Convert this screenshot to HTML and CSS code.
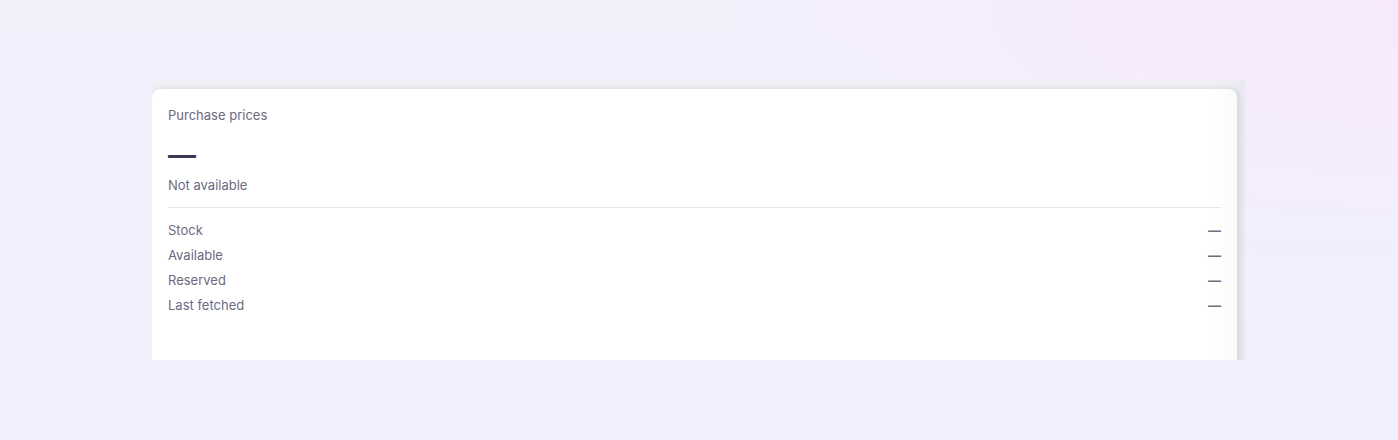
FILE: index.html
```html
<!DOCTYPE html>
<html lang="en">
<head>
<meta charset="utf-8">
<title>Purchase prices</title>
<link rel="stylesheet" href="styles.css">
</head>
<body>
<div class="stage">
  <div class="clip">
    <section class="card">
      <div class="title">Purchase prices</div>
      <div class="big">—</div>
      <div class="note">Not available</div>
      <hr class="sep">
      <dl class="rows">
        <div class="row"><dt>Stock</dt><dd>—</dd></div>
        <div class="row"><dt>Available</dt><dd>—</dd></div>
        <div class="row"><dt>Reserved</dt><dd>—</dd></div>
        <div class="row"><dt>Last fetched</dt><dd>—</dd></div>
      </dl>
    </section>
    <div class="fade"></div>
  </div>
</div>
</body>
</html>
```

FILE: styles.css
```css
html, body {
  margin: 0;
  padding: 0;
  height: 100%;
}
body {
  font-family: Inter, "Noto Sans", "Liberation Sans", sans-serif;
  overflow: hidden;
}
.stage {
  width: 1398px;
  height: 440px;
  background:
    radial-gradient(ellipse 700px 300px at 100% 0%, rgba(248, 232, 252, 0.9), rgba(248, 232, 252, 0) 100%),
    linear-gradient(180deg, #f3f0fc 0%, #eff0fc 100%);
  padding-top: 80px;
  padding-left: 152px;
  box-sizing: border-box;
}
.clip {
  position: relative;
  width: 1093px;
  height: 280px;
  overflow: hidden;
  padding-top: 9px;
  padding-right: 8px;
  box-sizing: border-box;
  background: #efeff4;
}
.card {
  background: #ffffff;
  border-radius: 8px 8px 0 0;
  height: 320px;
  padding: 16px 16px;
  box-sizing: border-box;
  box-shadow: 0 0 6px rgba(60, 60, 90, 0.08), 3px 0 4px rgba(60, 60, 90, 0.08);
  color: #6b6a80;
  font-size: 13px;
  line-height: 20px;
}
.fade {
  position: absolute;
  top: 0;
  right: 0;
  bottom: 0;
  width: 36px;
  background: linear-gradient(90deg, rgba(80, 80, 110, 0) 0%, rgba(80, 80, 110, 0.025) 70%, rgba(80, 80, 110, 0.04) 100%);
  pointer-events: none;
}
.title {
  color: #6b6a80;
}
.big {
  font-size: 28px;
  line-height: 36px;
  font-weight: 600;
  color: #3e3953;
  margin-top: 12px;
}
.note {
  margin-top: 2px;
}
.sep {
  border: 0;
  border-top: 1px solid #e4e4ea;
  margin: 12px 0 12px;
}
.rows {
  margin: 0;
  display: flex;
  flex-direction: column;
  gap: 5px;
}
.row {
  display: flex;
  justify-content: space-between;
}
.row dt, .row dd {
  margin: 0;
}
.row dd {
  color: #6e6d82;
  font-weight: 700;
}
```
